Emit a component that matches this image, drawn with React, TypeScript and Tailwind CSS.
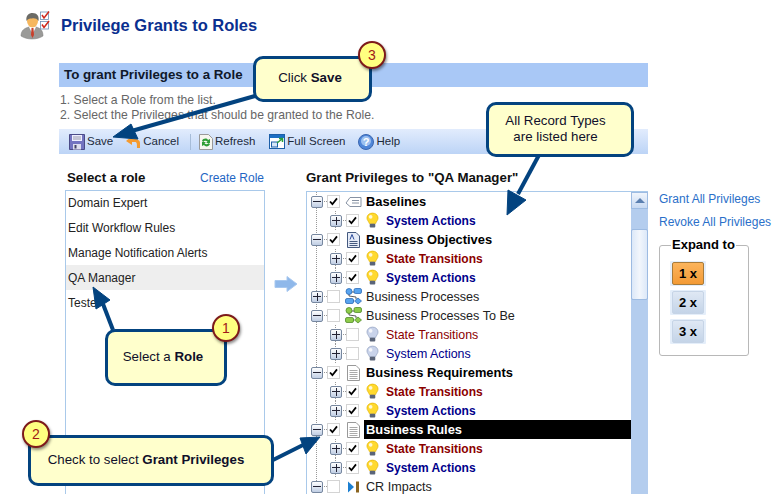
import React from "react";

type IconKind = "bulb" | "bulbOff" | "tag" | "docA" | "doc" | "flowBlue" | "flowGreen" | "impact";

type TreeRow = {
  label: string;
  level: 0 | 1;
  open?: boolean;
  checked?: boolean;
  icon: IconKind;
  tone?: "parent" | "plain" | "state" | "action" | "stateOff" | "actionOff";
  selected?: boolean;
};

const rows: TreeRow[] = [
  { label: "Baselines", level: 0, open: true, checked: true, icon: "tag", tone: "parent" },
  { label: "System Actions", level: 1, checked: true, icon: "bulb", tone: "action" },
  { label: "Business Objectives", level: 0, open: true, checked: true, icon: "docA", tone: "parent" },
  { label: "State Transitions", level: 1, checked: true, icon: "bulb", tone: "state" },
  { label: "System Actions", level: 1, checked: true, icon: "bulb", tone: "action" },
  { label: "Business Processes", level: 0, icon: "flowBlue", tone: "plain" },
  { label: "Business Processes To Be", level: 0, open: true, icon: "flowGreen", tone: "plain" },
  { label: "State Transitions", level: 1, icon: "bulbOff", tone: "stateOff" },
  { label: "System Actions", level: 1, icon: "bulbOff", tone: "actionOff" },
  { label: "Business Requirements", level: 0, open: true, checked: true, icon: "doc", tone: "parent" },
  { label: "State Transitions", level: 1, checked: true, icon: "bulb", tone: "state" },
  { label: "System Actions", level: 1, checked: true, icon: "bulb", tone: "action" },
  { label: "Business Rules", level: 0, open: true, checked: true, icon: "doc", tone: "parent", selected: true },
  { label: "State Transitions", level: 1, checked: true, icon: "bulb", tone: "state" },
  { label: "System Actions", level: 1, checked: true, icon: "bulb", tone: "action" },
  { label: "CR Impacts", level: 0, open: true, icon: "impact", tone: "plain" },
];

const toneClass = {
  parent: "font-bold text-[12.9px] text-black",
  plain: "text-[12.6px] text-[#222]",
  state: "font-bold text-[12px] text-[#8b0000]",
  action: "font-bold text-[12px] text-[#00008b]",
  stateOff: "text-[12.4px] text-[#8b0000]",
  actionOff: "text-[12.4px] text-[#00008b]",
};

const Expander = ({ open }: { open?: boolean }) => (
  <span className="relative z-10 flex h-[12px] w-[12px] shrink-0 items-center justify-center rounded-[2px] border border-[#76879f] bg-gradient-to-b from-white to-[#c0cee4]">
    <span className="h-px w-[8px] bg-[#223]" />
    {!open && <span className="absolute h-[8px] w-px bg-[#223]" />}
  </span>
);

const Checkbox = ({ checked }: { checked?: boolean }) => (
  <span className="relative z-10 flex h-[13px] w-[13px] shrink-0 items-center justify-center border border-[#d4d4d4] bg-white">
    {checked && (
      <svg width="9" height="9" viewBox="0 0 9 9">
        <path d="M1 4.500 L3.400 7.200 L8 1.400" fill="none" stroke="#000" strokeWidth="1.800" />
      </svg>
    )}
  </span>
);

const RowIcon = ({ kind }: { kind: IconKind }) => {
  if (kind === "bulb" || kind === "bulbOff") {
    const on = kind === "bulb";
    return (
      <svg width="13" height="17" viewBox="0 0 14 17">
        <path
          d="M7 .5C3.400.5 1 3 1 5.800c0 2.500 2 3.600 2.600 6h6.800C11 9.400 13 8.300 13 5.800 13 3 10.600.5 7 .5z"
          fill={on ? "#ffd92e" : "#c9d3ea"}
          stroke={on ? "#e2b100" : "#8e9dbd"}
          strokeWidth=".7"
        />
        <ellipse cx="5" cy="4.500" rx="2" ry="2" fill="#fff" opacity=".8" />
        <rect x="4" y="12" width="6" height="4" rx="1" fill="#5a6478" />
      </svg>
    );
  }
  if (kind === "tag") {
    return (
      <svg width="17" height="12" viewBox="0 0 17 12">
        <path d="M5 1.500H16V10.500H5L1 7z" fill="#fff" stroke="#8792a3" />
        <path d="M7 4.500H14M7 7H14" stroke="#8792a3" />
      </svg>
    );
  }
  if (kind === "docA" || kind === "doc") {
    const a = kind === "docA";
    return (
      <svg width="13" height="16" viewBox="0 0 13 16">
        <path d="M.5.500H9L12.500 4V15.500H.5z" fill={a ? "#e6ecf8" : "#fff"} stroke={a ? "#44597f" : "#999"} />
        {a && <path d="M3 7.500L5 2.500L7 7.500" fill="none" stroke="#2a4a9a" />}
        <path d="M2.500 9.500H10.500M2.500 11.500H10.500M2.500 13.500H10.500" stroke={a ? "#44597f" : "#aaa"} />
        {!a && <path d="M2.500 5.500H10.500M2.500 7.500H10.500" stroke="#aaa" />}
      </svg>
    );
  }
  if (kind === "flowBlue" || kind === "flowGreen") {
    const fill = kind === "flowBlue" ? "#58a4ef" : "#8ecb4a";
    const line = kind === "flowBlue" ? "#1d5fb0" : "#44801c";
    return (
      <svg width="17" height="17" viewBox="0 0 17 17">
        <path d="M5 4H11M4 6V8L11 9V11M4 11V13H9" fill="none" stroke="#333" strokeWidth=".8" />
        <circle cx="4" cy="3.500" r="3" fill={fill} stroke={line} strokeWidth=".7" />
        <rect x="9" y=".5" width="7.500" height="5" rx="1.500" fill={fill} stroke={line} strokeWidth=".7" />
        <rect x=".5" y="10.500" width="8" height="5" rx="1.500" fill={fill} stroke={line} strokeWidth=".7" />
        <path d="M13 10L16.500 13L13 16L9.500 13z" fill={fill} stroke={line} strokeWidth=".7" />
      </svg>
    );
  }
  return (
    <svg width="13" height="12" viewBox="0 0 13 12">
      <path d="M1 .5L7 6L1 11.500z" fill="#1b7fd1" />
      <rect x="9" y=".5" width="3" height="11" fill="#8a6420" />
    </svg>
  );
};

const TreeItem = ({ row }: { row: TreeRow }) => (
  <div className={`relative flex h-[19px] items-center ${row.level === 0 ? "pl-[4px]" : "pl-[23px]"}`}>
    {row.level === 1 && <span className="absolute bottom-0 left-[28px] top-0 border-l border-dotted border-[#999]" />}
    <span
      className={`absolute top-[9px] w-[10px] border-t border-dotted border-[#999] ${
        row.level === 0 ? "left-[14px]" : "left-[33px]"
      }`}
    />
    <Expander open={row.open} />
    <span className="ml-[4px]">
      <Checkbox checked={row.checked} />
    </span>
    <span className={`flex justify-center ${row.level === 0 ? "ml-[5px] w-[17px]" : "ml-[6px] w-[14px]"}`}>
      <RowIcon kind={row.icon} />
    </span>
    <span
      className={`ml-[2px] flex h-[19px] items-center whitespace-nowrap pt-px ${
        row.level === 1 ? "pl-[5px]" : "pl-[2px]"
      } ${row.selected ? "flex-1 bg-black !text-white" : ""} ${toneClass[row.tone ?? "plain"]}`}
    >
      {row.label}
    </span>
  </div>
);

const SaveIcon = () => (
  <svg width="16" height="16" viewBox="0 0 16 16">
    <path d="M.5.500H15.500V15.500H.5z" fill="#7373c0" stroke="#4b4b88" />
    <rect x="3" y="1" width="10" height="6" fill="#eef" />
    <path d="M4 3H12M4 5H12" stroke="#99a" />
    <rect x="4" y="10" width="8" height="5.500" fill="#dde" />
    <rect x="5.500" y="11" width="2" height="3.500" fill="#446" />
  </svg>
);

const CancelIcon = () => (
  <svg width="16" height="14" viewBox="0 0 16 14">
    <path d="M15 13V8C15 5 12 4 10 4H7V1L1 6L7 10V7H10C12 7 12 9 12 13z" fill="#f59a2e" />
  </svg>
);

const RefreshIcon = () => (
  <svg width="14" height="16" viewBox="0 0 14 16">
    <path d="M.5.500H9.500L13.500 4.500V15.500H.5z" fill="#f6f6f0" stroke="#999" />
    <path d="M3 7C4 4 8 4 9 6L11 5V9H7L8.500 7.800C7.500 6.500 5 6.500 4.500 8z" fill="#2e9e36" />
    <path d="M11 10C10 13 6 13 5 11L3 12V8H7L5.500 9.200C6.500 10.500 9 10.500 9.500 9z" fill="#2e9e36" />
  </svg>
);

const FullScreenIcon = () => (
  <svg width="16" height="15" viewBox="0 0 16 15">
    <rect x=".5" y=".5" width="15" height="14" fill="#fff" stroke="#1d5fa8" />
    <rect x="1" y="1" width="14" height="3" fill="#1d6fc4" />
    <rect x="2.500" y="8" width="6" height="5" fill="#d6e6f8" stroke="#1d5fa8" />
    <path d="M8 9L13 5M10 4.500H13.500V8" fill="none" stroke="#2a9e3a" strokeWidth="1.500" />
  </svg>
);

const HelpIcon = () => (
  <svg width="16" height="16" viewBox="0 0 16 16">
    <circle cx="8" cy="8" r="7.500" fill="#4f86d8" stroke="#3a66b0" />
    <circle cx="8" cy="7" r="5" fill="#9cc0f0" />
    <text x="8" y="12" textAnchor="middle" fontSize="11" fontWeight="700" fontFamily="Liberation Sans" fill="#fff">
      ?
    </text>
  </svg>
);

const PersonIcon = () => (
  <svg width="30" height="30" viewBox="0 0 30 30">
    <path d="M1 26C1 20 5 18 9 17H16C20 18 23 20 23 26C17 30 7 30 1 26z" fill="#9a9a98" stroke="#777" strokeWidth=".5" />
    <path d="M9 17L12.500 24L16 17z" fill="#fff" />
    <path d="M11.500 18H13.500L14 25L12.500 28L11 25z" fill="#c8402c" />
    <ellipse cx="12.500" cy="11" rx="5.500" ry="6.500" fill="#f6b75e" />
    <path d="M6.500 11C5.500 5.500 9 3 12.500 3C17 3 19.500 6 18.500 11C17 8.500 14 8 12 8.500C9.500 8.500 7.500 9 6.500 11z" fill="#6b6b66" />
    <rect x="20.500" y="2" width="8" height="7.500" fill="#fff" stroke="#6f8fb5" strokeWidth=".8" />
    <path d="M22 5L24 8L29 1.500" fill="none" stroke="#d0281c" strokeWidth="1.500" />
    <rect x="20.500" y="11.500" width="8" height="7.500" fill="#fff" stroke="#6f8fb5" strokeWidth=".8" />
    <path d="M22 14.500L24 17.500L29 11" fill="none" stroke="#d0281c" strokeWidth="1.500" />
  </svg>
);

const ToolButton = ({ icon, label }: { icon: React.ReactNode; label: string }) => (
  <span className="flex items-center gap-[2px] text-[11.5px] text-[#1c2a3a]">
    {icon}
    {label}
  </span>
);

const ExpandButton = ({ label, active }: { label: string; active?: boolean }) => (
  <span className="block w-fit rounded-[1px] bg-[#e4eefa] px-[2px] py-px">
    <span
      className={`flex h-[23px] w-[32px] items-center justify-center rounded-[2px] border text-[13px] font-bold text-black ${
        active
          ? "border-[#a87b3a] bg-gradient-to-b from-[#fbb45c] to-[#f39a34]"
          : "border-[#c6d4e6] bg-gradient-to-b from-[#dfe8f4] to-[#c4d4e8]"
      }`}
    >
      {label}
    </span>
  </span>
);

const Callout = ({ className, children }: { className: string; children: React.ReactNode }) => (
  <div
    className={`absolute flex items-center justify-center rounded-[10px] border-[3px] border-[#03437f] bg-[#ffffcc] pb-[2px] text-[13.3px] leading-[16px] text-[#10102a] ${className}`}
  >
    {children}
  </div>
);

const Badge = ({ className, n }: { className: string; n: number }) => (
  <div
    className={`absolute flex h-[28px] w-[28px] items-center justify-center rounded-full border-2 border-[#7d1a1a] bg-[#ffff80] text-[14px] text-[#a01818] shadow-[1px_2px_3px_rgba(0,0,0,0.45)] ${className}`}
  >
    {n}
  </div>
);

const Arrows = () => (
  <svg className="pointer-events-none absolute left-0 top-0" width="778" height="494">
    <g fill="#03437f" stroke="#03437f">
      <path d="M255 96L128 132" strokeWidth="4" />
      <path d="M113 137L131 124L138 139z" />
      <path d="M539 155L518 194" strokeWidth="4" />
      <path d="M507 215L508 190L526 200z" />
      <path d="M113 330L103 304" strokeWidth="4" />
      <path d="M93 287L110 300L96 309z" />
      <path d="M273 460L305 444" strokeWidth="4" />
      <path d="M320 437L306 454L300 438z" />
    </g>
  </svg>
);

export default function App() {
  return (
    <div className="relative h-[494px] w-[778px] overflow-hidden bg-white font-['Liberation_Sans',Arial,sans-serif]">
      <div className="flex h-[63px] items-start pl-[20px] pt-[10px]">
        <PersonIcon />
        <h1 className="ml-[11px] mt-[5px] text-[16.5px] font-bold leading-[20px] text-[#0a2f8f]">
          Privilege Grants to Roles
        </h1>
      </div>

      <div className="ml-[59px] w-[589px]">
        <div className="flex h-[24px] items-center bg-[#a9c8f6] pl-[5px] text-[13.3px] font-bold text-[#10182a]">
          To grant Privileges to a Role
        </div>
        <div className="pl-[1px] pt-[6px] text-[12.2px] leading-[15px] text-[#666]">
          <p>1. Select a Role from the list.</p>
          <p>2. Select the Privileges that should be granted to the Role.</p>
        </div>
        <div className="mt-[6px] flex h-[25px] items-center bg-gradient-to-b from-[#e2ecfd] to-[#bcd4f6] pl-[10px]">
          <ToolButton icon={<SaveIcon />} label="Save" />
          <span className="ml-[12px]">
            <ToolButton icon={<CancelIcon />} label="Cancel" />
          </span>
          <span className="ml-[11px] h-[16px] w-px bg-[#a6bcd8]" />
          <span className="ml-[8px]">
            <ToolButton icon={<RefreshIcon />} label="Refresh" />
          </span>
          <span className="ml-[14px]">
            <ToolButton icon={<FullScreenIcon />} label="Full Screen" />
          </span>
          <span className="ml-[13px]">
            <ToolButton icon={<HelpIcon />} label="Help" />
          </span>
        </div>
      </div>

      <div className="ml-[65px] flex">
        <div className="w-[200px]">
          <div className="flex h-[36px] items-center justify-between pr-px pl-[2px] pt-[11px]">
            <span className="text-[13.3px] font-bold text-[#111]">Select a role</span>
            <span className="text-[12px] text-[#1f66c4]">Create Role</span>
          </div>
          <div className="h-[320px] border border-[#a9c9ea] text-[12px] text-[#222]">
            <div className="-mt-px">
              {["Domain Expert", "Edit Workflow Rules", "Manage Notification Alerts", "QA Manager", "Tester"].map(
                (role) => (
                  <div
                    key={role}
                    className={`flex h-[25px] items-center pl-[2px] ${role === "QA Manager" ? "bg-[#eeeeee]" : ""}`}
                  >
                    {role}
                  </div>
                ),
              )}
            </div>
          </div>
        </div>

        <div className="flex w-[41px] justify-center pt-[122px] pl-[1px]">
          <svg width="24" height="16" viewBox="0 0 24 16" className="block">
            <path d="M1 4.500H13V.5L23 8L13 15.500V11.500H1z" fill="#8fb8ea" stroke="#a8c8ef" />
          </svg>
        </div>

        <div className="w-[342px]">
          <div className="flex h-[37px] items-center pt-[10px] text-[13.3px] font-bold text-[#111]">
            Grant Privileges to "QA Manager"
          </div>
          <div className="relative flex h-[320px] border-t border-l border-[#a9c9ea]">
            <div className="absolute left-[9px] top-0 h-full border-l border-dotted border-[#999]" />
            <div className="relative min-w-0 flex-1">
              {rows.map((row, i) => (
                <TreeItem key={i} row={row} />
              ))}
            </div>
            <div className="relative flex w-[17px] flex-col bg-[#b4cdee]">
              <div className="flex h-[17px] items-center justify-center border border-[#9dbbe2] bg-gradient-to-b from-[#f0f5fc] to-[#c7d9f2]">
                <span className="h-0 w-0 border-x-[5px] border-b-[5px] border-x-transparent border-b-[#5a7fb0]" />
              </div>
              <div className="mt-[20px] h-[71px] rounded-[2px] border border-[#9dbbe2] bg-gradient-to-r from-[#dce8f8] via-[#f2f6fc] to-[#dce8f8]" />
            </div>
          </div>
        </div>

        <div className="ml-[11px] w-[118px] pt-[37px]">
          <div className="text-[12px] leading-[15px] text-[#2a6fc9]">
            <p className="pt-px">Grant All Privileges</p>
            <p className="pt-[8px]">Revoke All Privileges</p>
          </div>
          <fieldset className="mt-[8px] h-[118px] w-[90px] rounded-[3px] border border-[#b8b8b8] pl-[10px]">
            <legend className="ml-px px-px text-[13px] font-bold leading-[14px] text-black">Expand to</legend>
            <div className="mt-[9px] flex flex-col gap-[4px]">
              <ExpandButton label="1 x" active />
              <ExpandButton label="2 x" />
              <ExpandButton label="3 x" />
            </div>
          </fieldset>
        </div>
      </div>

      <Arrows />

      <Callout className="left-[253px] top-[56px] h-[46px] w-[119px] pr-[5px]">
        <span>
          Click <b>Save</b>
        </span>
      </Callout>
      <Badge className="left-[358px] top-[41px]" n={3} />

      <Callout className="left-[486px] top-[102px] h-[55px] w-[148px] pr-[9px] text-center">
        <span>
          All Record Types
          <br />
          are listed here
        </span>
      </Callout>

      <Callout className="left-[105px] top-[329px] h-[57px] w-[122px] pr-[6px]">
        <span>
          Select a <b>Role</b>
        </span>
      </Callout>
      <Badge className="left-[212px] top-[314px]" n={1} />

      <Callout className="left-[28px] top-[435px] h-[51px] w-[246px] pr-[10px]">
        <span>
          Check to select <b>Grant Privileges</b>
        </span>
      </Callout>
      <Badge className="left-[22px] top-[420px]" n={2} />
    </div>
  );
}
